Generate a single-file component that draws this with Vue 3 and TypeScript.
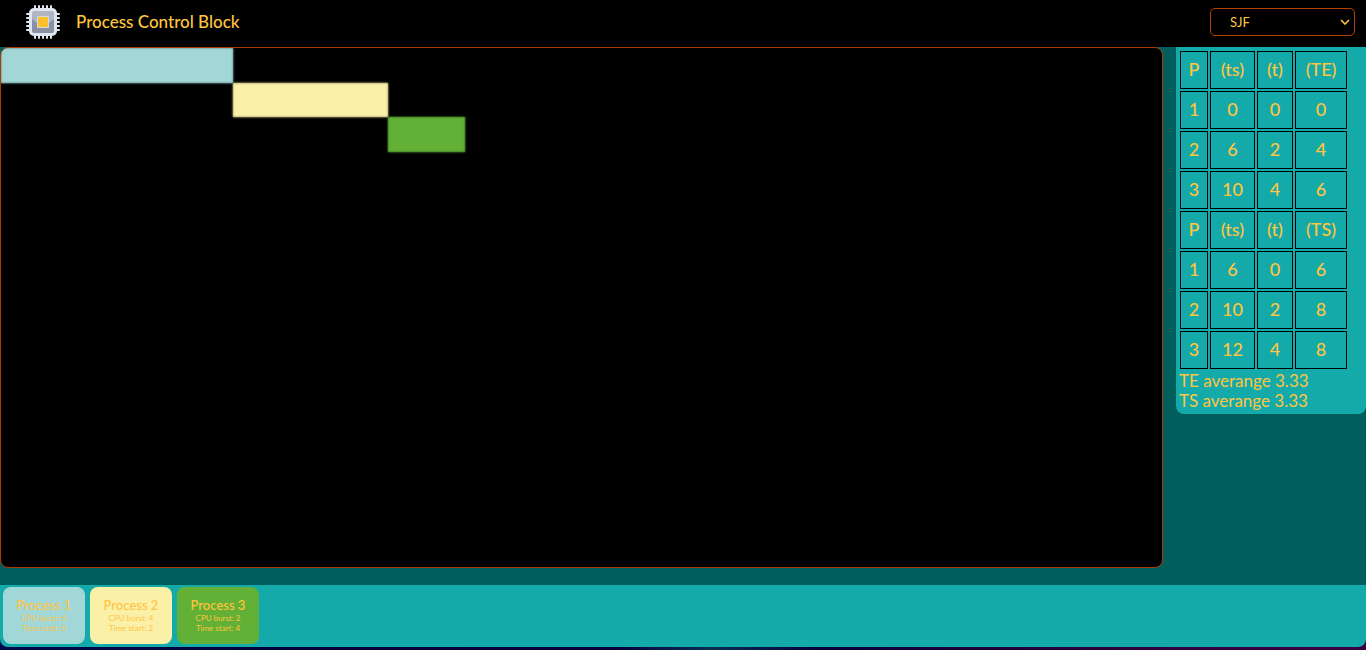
<script setup lang="ts">
import { computed, ref } from 'vue'

interface Process {
  id: number
  burst: number
  arrival: number
  begin: number
  color: string
}

const algorithm = ref('SJF')
const algorithms = ['SJF', 'FIFO', 'Round Robin']

const processes: Process[] = [
  { id: 1, burst: 6, arrival: 0, begin: 0, color: '#a2d7d8' },
  { id: 2, burst: 4, arrival: 2, begin: 6, color: '#fbf0a8' },
  { id: 3, burst: 2, arrival: 4, begin: 10, color: '#62b035' },
]

const waits = computed(() =>
  processes.map((p) => [p.id, p.begin, p.arrival, p.begin - p.arrival]),
)
const turnarounds = computed(() =>
  processes.map((p) => [p.id, p.begin + p.burst, p.arrival, p.begin + p.burst - p.arrival]),
)
const average = computed(() =>
  (waits.value.reduce((sum, row) => sum + row[3], 0) / processes.length).toFixed(2),
)

const pins = [10, 14, 18, 22, 26]
</script>

<template>
  <div class="page">
    <header class="header">
      <svg class="logo" viewBox="1 1 34 34" aria-hidden="true">
        <g fill="#dfe6f0">
          <template v-for="p in pins" :key="p">
            <rect :x="p - 1" y="1" width="2" height="5" rx="1" />
            <rect :x="p - 1" y="30" width="2" height="5" rx="1" />
            <rect x="1" :y="p - 1" width="5" height="2" rx="1" />
            <rect x="30" :y="p - 1" width="5" height="2" rx="1" />
          </template>
        </g>
        <rect x="4" y="4" width="28" height="28" rx="5" fill="#dfe6f0" />
        <rect x="7" y="7" width="22" height="22" rx="2" fill="#b0b5c4" />
        <path d="M7 15l5 4h12l5-4v12a2 2 0 0 1-2 2H9a2 2 0 0 1-2-2z" fill="#8b91a4" />
        <rect x="12" y="12" width="12" height="12" rx="1" fill="#d3d8e2" />
        <rect x="13" y="13" width="10" height="10" fill="#ffc02e" />
      </svg>
      <h1 class="title">Process Control Block</h1>
      <div class="picker">
        <select v-model="algorithm" class="select" aria-label="Scheduling algorithm">
          <option v-for="a in algorithms" :key="a">{{ a }}</option>
        </select>
        <svg class="chevron" viewBox="0 0 10 6" aria-hidden="true">
          <path d="M1 1l4 4 4-4" fill="none" stroke="#ffc540" stroke-width="1.6" />
        </svg>
      </div>
    </header>

    <main class="main">
      <section class="board" aria-label="Timeline">
        <div
          v-for="(p, i) in processes"
          :key="p.id"
          class="bar"
          :style="{
            gridColumn: `${p.begin + 1} / span ${p.burst}`,
            gridRow: i + 1,
            backgroundColor: p.color,
            '--bar': p.color,
          }"
        ></div>
      </section>

      <aside class="side">
        <table class="table">
          <colgroup>
            <col class="c1" />
            <col class="c2" />
            <col class="c3" />
            <col class="c4" />
          </colgroup>
          <tbody>
            <tr><th>P</th><th>(ts)</th><th>(t)</th><th>(TE)</th></tr>
            <tr v-for="row in waits" :key="row[0]">
              <td v-for="(v, i) in row" :key="i">{{ v }}</td>
            </tr>
          </tbody>
          <tbody>
            <tr><th>P</th><th>(ts)</th><th>(t)</th><th>(TS)</th></tr>
            <tr v-for="row in turnarounds" :key="row[0]">
              <td v-for="(v, i) in row" :key="i">{{ v }}</td>
            </tr>
          </tbody>
        </table>
        <p class="avg">TE averange {{ average }}</p>
        <p class="avg">TS averange {{ average }}</p>
      </aside>
    </main>

    <footer class="footer">
      <article
        v-for="p in processes"
        :key="p.id"
        class="card"
        :style="{ backgroundColor: p.color }"
      >
        <h2 class="name">Process {{ p.id }}</h2>
        <p class="info">CPU burst: {{ p.burst }}</p>
        <p class="info">Time start: {{ p.arrival }}</p>
      </article>
    </footer>
  </div>
</template>

<style>
body {
  margin: 0;
  background: #0b0034;
}
</style>

<style scoped>
.page {
  box-sizing: border-box;
  display: flex;
  flex-direction: column;
  min-height: 100vh;
  padding-bottom: 3px;
  background: linear-gradient(90deg, #000a4a, #05003a 25%, #08003a 45%, #053052 52%, #08003a 60%, #2a0038 80%, #3a0040);
  color: #ffc540;
  font-family: Lato, "Open Sans", sans-serif;
}
.header {
  display: flex;
  align-items: center;
  box-sizing: border-box;
  height: 47px;
  padding: 0 11px 3px 26px;
  background: #000;
}
.logo {
  width: 34px;
  height: 34px;
}
.title {
  margin: 0 auto 0 16px;
  font-size: 17px;
  line-height: 20px;
  font-weight: 500;
}
.picker {
  position: relative;
}
.select {
  display: block;
  box-sizing: border-box;
  width: 145px;
  height: 28px;
  padding: 0 19px;
  border: 1px solid #b84300;
  border-radius: 5px;
  appearance: none;
  background: #000;
  color: #ffc540;
  font-family: inherit;
  font-size: 13px;
}
.chevron {
  position: absolute;
  top: 11px;
  right: 5px;
  width: 10px;
  height: 6px;
  pointer-events: none;
}
.main {
  flex: 1;
  display: flex;
  align-items: flex-start;
  justify-content: space-between;
  padding-bottom: 17px;
  background: #005f5d;
}
.board {
  box-sizing: border-box;
  align-self: stretch;
  flex: 0 1 1163px;
  display: grid;
  grid-template-columns: repeat(30, 1fr);
  grid-template-rows: repeat(15, 1fr);
  overflow: hidden;
  border: 1px solid #a83e05;
  border-radius: 8px;
  background: #000;
}
.bar {
  box-shadow: 0 0 2px var(--bar), inset 0 0 2px rgba(0, 0, 0, 0.6);
}
.side {
  box-sizing: border-box;
  flex: none;
  width: 190px;
  padding: 2px 2px 3px;
  border-radius: 0 0 8px 8px;
  background: #14aaaa;
}
.table {
  table-layout: fixed;
  width: 171px;
  border-spacing: 2px;
  font-size: 18px;
  line-height: 20px;
}
.c1 {
  width: 28px;
}
.c2 {
  width: 45px;
}
.c3 {
  width: 36px;
}
.c4 {
  width: 52px;
}
th,
td {
  box-sizing: border-box;
  height: 38px;
  padding: 0 0 2px;
  border: 1px solid #000;
  text-align: center;
  font-weight: 500;
}
.avg {
  margin: 0;
  padding-left: 1px;
  font-size: 17px;
  line-height: 20px;
}
.footer {
  display: flex;
  gap: 5px;
  padding: 2px 3px 3px;
  border-radius: 0 0 8px 8px;
  background: #14aaaa;
}
.card {
  box-sizing: border-box;
  width: 82px;
  height: 57px;
  padding-top: 11px;
  border-radius: 8px;
  text-align: center;
}
.name {
  margin: 0;
  font-size: 13px;
  line-height: 15px;
  font-weight: 500;
}
.info {
  margin: 0;
  font-size: 8px;
  line-height: 10px;
}
</style>
